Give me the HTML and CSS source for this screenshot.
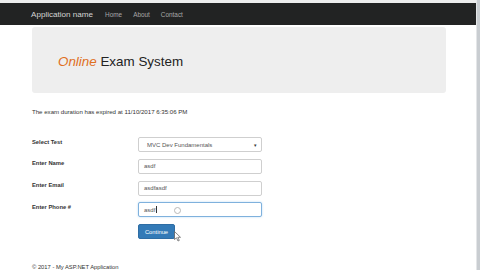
FILE: index.html
```html
<!DOCTYPE html>
<html>
<head>
<meta charset="utf-8">
<link rel="stylesheet" href="styles.css">
</head>
<body>
<div class="page">
  <div class="main">
    <div class="topstrip"></div>
    <nav class="navbar">
      <span class="brand">Application name</span>
      <span class="navlink">Home</span>
      <span class="navlink">About</span>
      <span class="navlink">Contact</span>
    </nav>
    <div class="container">
      <div class="jumbotron">
        <h1 class="title"><em class="accent">Online</em> Exam System</h1>
      </div>
      <p class="message">The exam duration has expired at 11/10/2017 6:35:06 PM</p>
      <form class="form">
        <div class="row">
          <label class="label">Select Test</label>
          <div class="control select">
            <span>MVC Dev Fundamentals</span>
            <span class="caret">&#9662;</span>
          </div>
        </div>
        <div class="row">
          <label class="label">Enter Name</label>
          <div class="control">asdf</div>
        </div>
        <div class="row">
          <label class="label">Enter Email</label>
          <div class="control">asdfasdf</div>
        </div>
        <div class="row">
          <label class="label">Enter Phone #</label>
          <div class="control focus">asdf<span class="textcursor"></span>
            <span class="ring"></span>
          </div>
        </div>
        <div class="row">
          <span class="label"></span>
          <div class="btnwrap">
            <span class="btn">Continue</span>
            <svg class="pointer" width="8" height="11" viewBox="0 0 8 11"><path d="M0.5 0.5 L0.5 8.5 L2.5 6.8 L4 10 L5.3 9.4 L3.8 6.3 L6.5 6.3 Z" fill="#fff" stroke="#555" stroke-width="0.7"/></svg>
          </div>
        </div>
      </form>
      <footer class="footer">&copy; 2017 - My ASP.NET Application</footer>
    </div>
  </div>
  <div class="scrollbar"></div>
</div>
</body>
</html>
```
FILE: styles.css
```css
html, body {
  margin: 0;
  padding: 0;
  background: #fff;
  overflow: hidden;
}
body {
  font-family: "Liberation Sans", Arial, sans-serif;
  color: #333;
}
.page {
  display: flex;
  width: 480px;
  height: 270px;
  overflow: hidden;
}
.main {
  flex: 1;
  min-width: 0;
}
.scrollbar {
  width: 3px;
  background: #c9cdd1;
  border-left: 1px solid #e4e6e8;
}
.topstrip {
  height: 3px;
  background: #ededed;
}
.navbar {
  height: 22px;
  background: #222323;
  display: flex;
  align-items: center;
  padding-left: 31px;
}
.brand {
  color: #d4d4d4;
  font-size: 8.1px;
  margin-right: 12px;
}
.navlink {
  color: #a8a8a8;
  font-size: 6.4px;
  margin-right: 11px;
}
.container {
  padding: 0 30px 0 32px;
}
.jumbotron {
  margin-top: 2px;
  height: 66px;
  background: #eeeeee;
  border-radius: 3px;
  display: flex;
  align-items: center;
  padding-left: 26px;
}
.title {
  margin: 0;
  font-weight: normal;
  font-size: 13.4px;
  color: #222;
  position: relative;
  top: 1px;
}
.accent {
  color: #e0701e;
  font-style: italic;
}
.message {
  margin: 15px 0 0 0;
  font-size: 6.1px;
  line-height: 8px;
  color: #333;
}
.form {
  margin-top: 21px;
  display: flex;
  flex-direction: column;
  gap: 6.8px;
}
.row {
  display: flex;
  align-items: flex-start;
}
.label {
  width: 106px;
  font-size: 5.8px;
  line-height: 8px;
  padding-top: 0.5px;
  font-weight: bold;
  color: #333;
}
.control {
  position: relative;
  box-sizing: border-box;
  width: 124px;
  height: 15px;
  border: 1px solid #cfcfcf;
  border-radius: 2px;
  background: #fff;
  font-size: 6px;
  color: #555;
  display: flex;
  align-items: center;
  padding-left: 5px;
}
.select {
  justify-content: space-between;
  padding-left: 8px;
  padding-right: 4px;
}
.caret {
  font-size: 5px;
  color: #333;
}
.focus {
  border-color: #7fb1dd;
  box-shadow: 0 0 2px rgba(102, 175, 233, 0.5);
}
.textcursor {
  display: inline-block;
  width: 0.6px;
  height: 7px;
  background: #333;
  margin-left: 0.5px;
}
.ring {
  position: absolute;
  left: 35px;
  top: 4px;
  width: 5px;
  height: 5px;
  border: 1px solid #b8b8b8;
  border-radius: 50%;
}
.btnwrap {
  position: relative;
}
.btn {
  box-sizing: border-box;
  display: flex;
  align-items: center;
  justify-content: center;
  width: 37px;
  height: 15px;
  background: #337ab7;
  border: 1px solid #2e6da4;
  border-radius: 2px;
  color: #fff;
  font-size: 5.8px;
}
.pointer {
  position: absolute;
  left: 36px;
  top: 7px;
}
.footer {
  margin-top: 25px;
  font-size: 5.8px;
  color: #333;
}
```
